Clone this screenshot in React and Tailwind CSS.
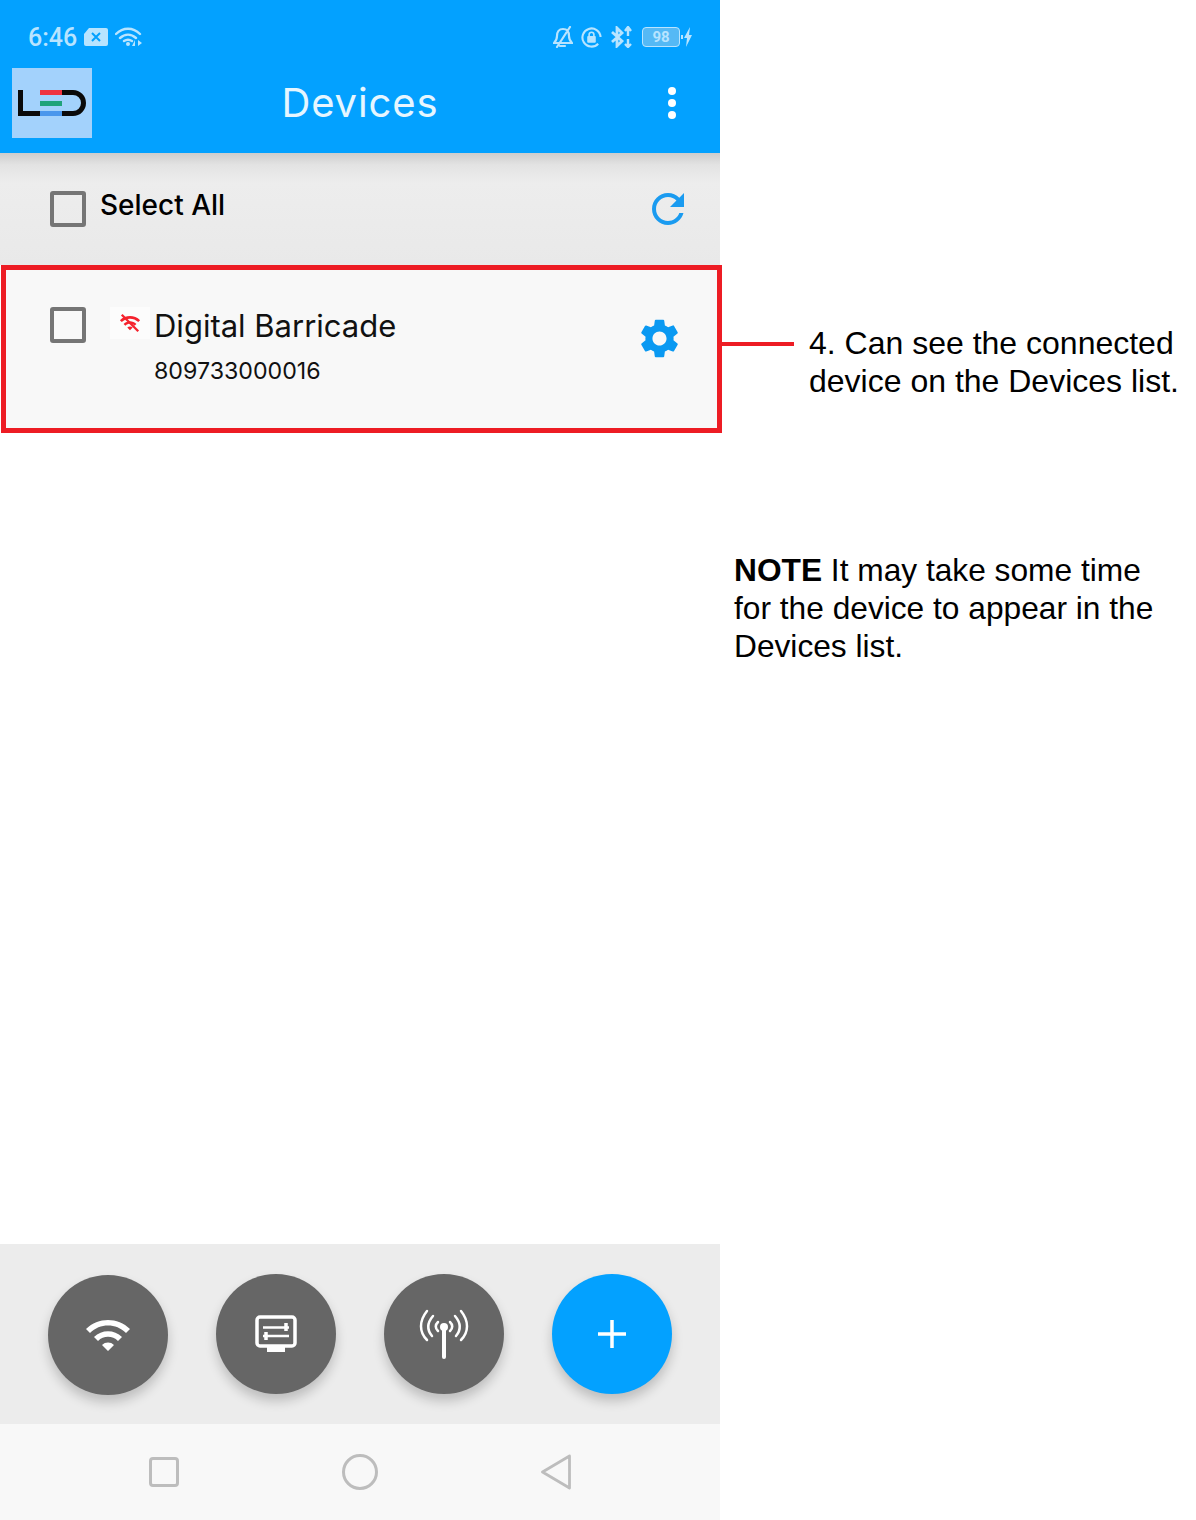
const Wifi = ({ className }) => (
  <svg viewBox="0 0 24 24" className={className} fill="currentColor">
    <path d="M1 9l2 2c4.970-4.970 13.030-4.970 18 0l2-2C16.930 2.930 7.080 2.930 1 9zm8 8l3 3 3-3c-1.650-1.660-4.340-1.660-6 0zm-4-4l2 2c2.760-2.760 7.240-2.760 10 0l2-2C15.140 9.140 8.870 9.140 5 13z" />
  </svg>
);

const Check = () => <div className="h-9 w-9 shrink-0 rounded-[3px] border-4 border-[#757575]" />;

const Fab = ({ blue, low, children }) => (
  <div
    className={`flex h-[120px] w-[120px] items-center justify-center rounded-full text-white shadow-[0_7px_12px_rgba(0,0,0,0.2)] ${
      blue ? "bg-[#03a1ff]" : "bg-[#666666]"
    } ${low ? "mt-[1px]" : ""}`}
  >
    {children}
  </div>
);

const StatusLeft = () => (
  <div className="flex items-center text-[#b8e4ff]">
    <span className="ml-[28px] font-['Roboto',sans-serif] text-[25px] font-medium leading-none">6:46</span>
    <svg viewBox="0 0 24 18" className="ml-[7px] h-[18px] w-[24px]">
      <path d="M5 0H22a2 2 0 0 1 2 2V16a2 2 0 0 1-2 2H2a2 2 0 0 1-2-2V6z" fill="currentColor" />
      <path d="M8 5l8 8M16 5l-8 8" stroke="#03a1ff" strokeWidth="2" />
    </svg>
    <svg viewBox="0 0 28 20" className="ml-[7px] h-[20px] w-[28px]" fill="none" stroke="currentColor" strokeWidth="2.400" strokeLinecap="round">
      <path d="M1 7C8 0 18 0 25 7M5 11c5-4.500 11-4.500 16 0M9 14c3-2 5-2 8 0" />
      <circle cx="13" cy="17" r="2" fill="currentColor" stroke="none" />
      <path d="M20 13l-3 6h3zM23 13l4 3-4 3z" fill="currentColor" stroke="none" />
    </svg>
  </div>
);

const StatusRight = () => (
  <div className="flex items-center pr-[28px] text-[#b8e4ff]">
    <svg viewBox="0 0 20 22" className="h-[22px] w-[20px]" fill="none" stroke="currentColor" strokeWidth="2.200" strokeLinecap="round">
      <path d="M1 17c2-2 3-3 3-7 0-4 2-7 6-7s6 3 6 7c0 4 1 5 3 7zM7 20h5M17 1L4 21" />
    </svg>
    <svg viewBox="0 0 22 22" className="ml-[8px] h-[22px] w-[21px]" fill="none" stroke="currentColor" strokeWidth="2.200">
      <path d="M18 18a9.500 9.500 0 1 1 2.500-7" />
      <rect x="6.500" y="10" width="9" height="7" rx="1" fill="currentColor" stroke="none" />
      <path d="M8.500 10V8.500a2.500 2.500 0 0 1 5 0V10" strokeWidth="1.700" />
    </svg>
    <svg viewBox="0 0 22 22" className="ml-[9px] h-[22px] w-[22px]" fill="none" stroke="currentColor" strokeWidth="2.800">
      <path d="M1 6l10 9-5 5V2l5 5L1 16" />
      <path d="M17 10V2M14 5l3-4 3 4M17 13v8M14 18l3 3 3-3" strokeWidth="2.400" />
    </svg>
    <div className="ml-[9px] flex h-[20px] w-[38px] items-center justify-center rounded-[4px] border border-[#b8e4ff] bg-[#55b9f5] font-['Roboto',sans-serif] text-[15px] font-bold leading-none">
      98
    </div>
    <div className="ml-[1px] h-[4px] w-[2px] bg-[#b8e4ff]" />
    <svg viewBox="0 0 8 20" className="ml-[1px] h-[20px] w-[8px]" fill="currentColor">
      <path d="M6 0L0 11h3l-1 9 6-12H5z" />
    </svg>
  </div>
);

export default function App() {
  return (
    <div className="flex h-[1520px] w-[1196px] bg-white font-['Inter',sans-serif]">
      <div className="flex h-full w-[720px] shrink-0 flex-col">
        <header className="h-[153px] bg-[#03a1ff]">
          <div className="flex h-[68px] items-center justify-between pt-[6px]">
            <StatusLeft />
            <StatusRight />
          </div>
          <div className="flex h-[70px] items-center">
            <div className="ml-[12px] flex h-[70px] w-[80px] shrink-0 items-center justify-center bg-[#a3d2fc]">
              <svg viewBox="0 0 70 26" className="h-[26px] w-[70px]">
                <path d="M3.500 0V23.500H24" fill="none" stroke="#0a0a0a" strokeWidth="5" />
                <rect x="23" y="0" width="22" height="5" fill="#ef3340" />
                <rect x="23" y="11" width="22" height="5" fill="#1fa37a" />
                <rect x="23" y="21" width="22" height="5" fill="#4a97ec" />
                <path d="M45 2.500H56a10.500 10.500 0 0 1 0 21H45" fill="none" stroke="#0a0a0a" strokeWidth="5" />
              </svg>
            </div>
            <h1 className="flex-1 text-center text-[40px] font-normal leading-none tracking-[0.9px] text-[#e6f6ff]">Devices</h1>
            <div className="flex w-[92px] shrink-0 justify-center pr-[4px]">
              <div className="flex flex-col gap-[4px]">
                <div className="h-[8px] w-[8px] rounded-full bg-white" />
                <div className="h-[8px] w-[8px] rounded-full bg-white" />
                <div className="h-[8px] w-[8px] rounded-full bg-white" />
              </div>
            </div>
          </div>
        </header>

        <div className="flex h-[112px] items-start bg-[linear-gradient(to_bottom,#cdcdcd_0px,#e3e3e3_12px,#ededed_30px,#e9e9e9_112px)] pl-[50px] pr-[28px]">
          <div className="mt-[38px]"><Check /></div>
          <span className="ml-[14px] mt-[34px] text-[28px] font-medium leading-[36px] text-black">Select All</span>
          <svg viewBox="0 0 24 24" className="ml-auto mt-[32px] h-[48px] w-[48px] text-[#1a9bf0]" fill="currentColor">
            <path d="M17.650 6.350C16.200 4.900 14.210 4 12 4c-4.420 0-7.990 3.580-7.990 8s3.570 8 7.990 8c3.730 0 6.840-2.550 7.730-6h-2.080c-.82 2.330-3.040 4-5.650 4-3.310 0-6-2.690-6-6s2.690-6 6-6c1.660 0 3.140.69 4.220 1.780L13 11h7V4l-2.350 2.350z" />
          </svg>
        </div>

        <div className="ml-[1px] flex h-[168px] w-[721px] shrink-0 items-center border-[5px] border-[#ed1c24] bg-[#f8f8f8] pl-[44px] pr-[34px]">
          <div className="flex h-full items-start pt-[32px]">
            <div className="mt-[5px]"><Check /></div>
            <div className="ml-[24px] mt-[5px] flex h-[32px] w-[40px] items-center justify-center bg-[#fcfcfc]">
              <svg viewBox="0 0 24 24" className="h-[22px] w-[24px] text-[#f5222d]" fill="currentColor">
                <path d="M1 9l2 2c4.970-4.970 13.030-4.970 18 0l2-2C16.930 2.930 7.080 2.930 1 9zm8 8l3 3 3-3c-1.650-1.660-4.340-1.660-6 0zm-4-4l2 2c2.760-2.760 7.240-2.760 10 0l2-2C15.140 9.140 8.870 9.140 5 13z" />
                <path d="M3 3l18 18" stroke="currentColor" strokeWidth="2.500" />
              </svg>
            </div>
            <div className="ml-[4px] flex flex-col">
              <span className="mt-[3px] text-[31px] leading-[42px] text-[#111111]">Digital Barricade</span>
              <span className="mt-[4px] text-[23.200px] leading-[40px] text-[#111111]">809733000016</span>
            </div>
          </div>
          <svg viewBox="0 0 24 24" className="ml-auto mb-[21px] h-[47px] w-[47px] text-[#0a99f2]" fill="currentColor">
            <path d="M19.140 12.940c.04-.3.06-.61.06-.94 0-.32-.02-.64-.07-.94l2.030-1.580a.49.49 0 0 0 .12-.61l-1.920-3.320a.488.488 0 0 0-.59-.22l-2.390.96c-.5-.38-1.030-.7-1.620-.94l-.36-2.540a.484.484 0 0 0-.48-.41h-3.840c-.24 0-.43.17-.47.41l-.36 2.540c-.59.24-1.130.57-1.620.94l-2.390-.96c-.22-.08-.47 0-.59.22L2.740 8.870c-.12.21-.08.47.12.61l2.030 1.580c-.05.3-.09.63-.09.94s.02.64.07.94l-2.030 1.580a.49.49 0 0 0-.12.61l1.920 3.320c.12.22.37.29.59.22l2.390-.96c.5.38 1.030.7 1.620.94l.36 2.540c.05.24.24.41.48.41h3.840c.24 0 .44-.17.47-.41l.36-2.540c.59-.24 1.130-.56 1.620-.94l2.390.96c.22.08.47 0 .59-.22l1.920-3.320c.12-.22.07-.47-.12-.61l-2.010-1.580zM12 15.600c-1.980 0-3.600-1.620-3.600-3.600s1.620-3.600 3.600-3.600 3.600 1.620 3.600 3.600-1.620 3.600-3.600 3.600z" />
          </svg>
        </div>

        <div className="flex-1 bg-white" />

        <div className="flex h-[180px] shrink-0 items-start gap-[48px] bg-[#ececec] pl-[48px] pt-[30px]">
          <Fab low><Wifi className="h-[48px] w-[48px]" /></Fab>
          <Fab>
            <svg viewBox="0 0 42 38" className="h-[38px] w-[42px]" fill="none" stroke="currentColor" strokeWidth="3.500">
              <rect x="2" y="2" width="38" height="29" rx="3" />
              <rect x="12" y="32" width="18" height="5" fill="currentColor" stroke="none" />
              <path d="M8 12.500H34M8 21H34" strokeWidth="2.500" />
              <path d="M31 8V16M11 17V25" strokeWidth="3.500" />
            </svg>
          </Fab>
          <Fab>
            <svg viewBox="0 0 50 52" className="mb-[2px] h-[52px] w-[50px]" fill="none" stroke="currentColor" strokeWidth="2.500" strokeLinecap="round">
              <path d="M8 4C0 14 0 25 8 33M14 9C8 16 8 23 13 29M19 15c-3 3-3 6 0 9" />
              <path d="M42 4c8 10 8 21 0 29M36 9C42 16 42 23 37 29M31 15c3 3 3 6 0 9" />
              <path d="M25 20V50" strokeWidth="4" />
              <circle cx="25" cy="20" r="4" fill="currentColor" stroke="none" />
            </svg>
          </Fab>
          <Fab blue>
            <svg viewBox="0 0 30 30" className="h-[30px] w-[30px]" fill="none" stroke="currentColor" strokeWidth="3.500">
              <path d="M15 1V29M1 15H29" />
            </svg>
          </Fab>
        </div>

        <nav className="flex h-[96px] shrink-0 items-center justify-center bg-[#f8f8f8]">
          <div className="flex w-[196px] justify-center">
            <div className="h-[30px] w-[30px] rounded-[4px] border-[3px] border-[#bdbdbd]" />
          </div>
          <div className="flex w-[196px] justify-center">
            <div className="h-[36px] w-[36px] rounded-full border-[3px] border-[#bdbdbd]" />
          </div>
          <div className="flex w-[196px] justify-center">
            <svg viewBox="0 0 30 36" className="h-[36px] w-[30px]" fill="none" stroke="#bdbdbd" strokeWidth="2.800" strokeLinejoin="round">
              <path d="M28.500 2L1.500 18l27 16z" />
            </svg>
          </div>
        </nav>
      </div>

      <div className="flex-1 font-['Liberation_Sans',sans-serif] text-[32px] leading-[38px] text-black">
        <div className="flex items-start pl-[2px] pt-[324px]">
          <div className="mt-[18px] h-[4px] w-[72px] shrink-0 bg-[#ed1c24]" />
          <p className="ml-[15px] whitespace-nowrap">
            4. Can see the connected<br />device on the Devices list.
          </p>
        </div>
        <p className="ml-[14px] mt-[151px] whitespace-nowrap text-[31.700px]">
          <strong className="font-bold">NOTE</strong> It may take some time<br />
          for the device to appear in the<br />
          Devices list.
        </p>
      </div>
    </div>
  );
}
